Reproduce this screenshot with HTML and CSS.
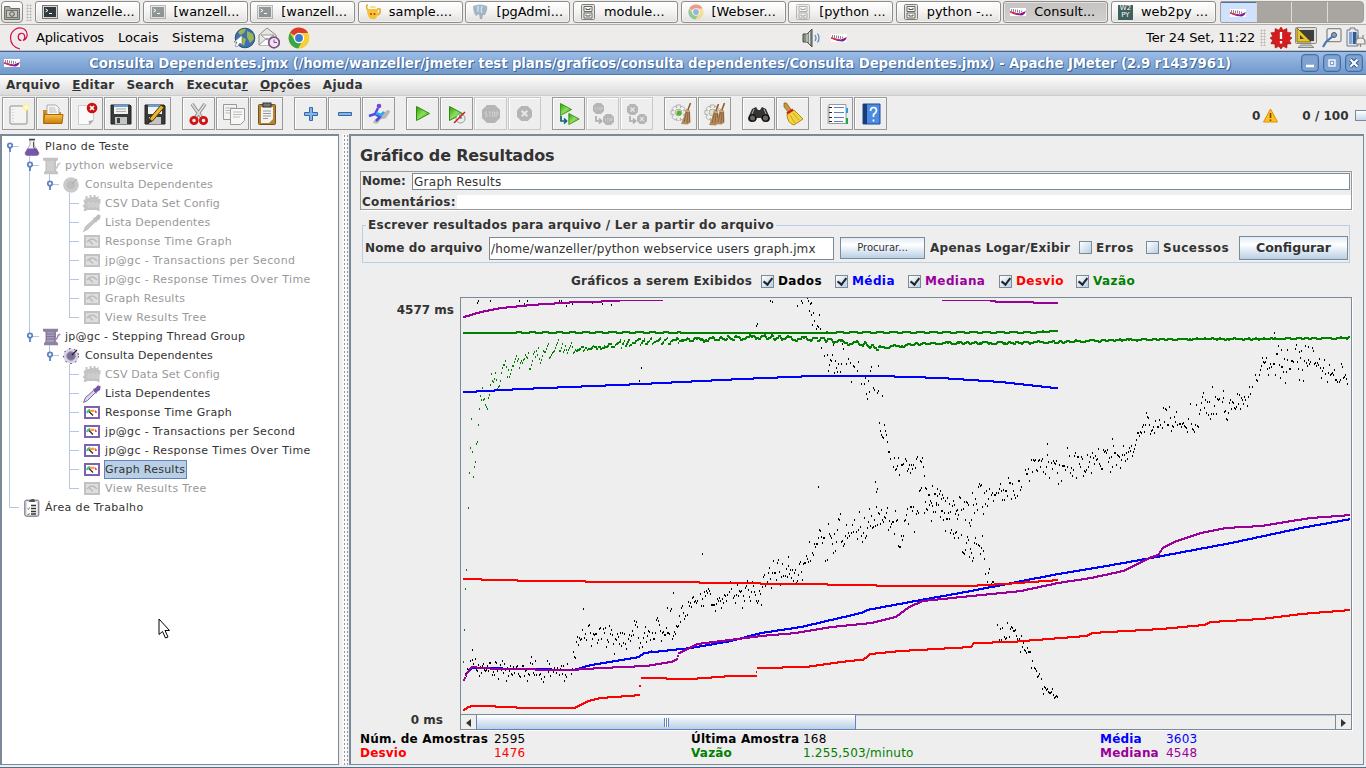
FILE: index.html
```html
<!DOCTYPE html>
<html lang="pt-BR">
<head>
<meta charset="utf-8">
<title>Consulta Dependentes.jmx - Apache JMeter</title>
<link rel="stylesheet" href="styles.css">
</head>
<body>
<svg class="defs" width="0" height="0">
  <defs>
    <linearGradient id="play" x1="0" y1="0" x2="1" y2="1"><stop offset="0" stop-color="#2f9a0b"/><stop offset=".5" stop-color="#8ce05a"/><stop offset="1" stop-color="#3b9f12"/></linearGradient>
    <linearGradient id="folder" x1="0" y1="0" x2="0" y2="1"><stop offset="0" stop-color="#f6c350"/><stop offset="1" stop-color="#c97c05"/></linearGradient>
    <symbol id="term" viewBox="0 0 16 16"><rect x=".5" y="1.5" width="15" height="13" fill="#d8d8d4" stroke="#777"/><rect x="2" y="3" width="12" height="10" fill="#2f3b3d"/><path d="M3.500 5l2.500 1.500-2.500 1.500M7 9.500h3" stroke="#fff" fill="none"/></symbol>
    <symbol id="cabinet" viewBox="0 0 16 16"><rect x="1.500" y=".5" width="13" height="15" rx="1" fill="#e4e4df" stroke="#80807a"/><path d="M4 2.500h8v5H4zM4 9h8v5H4z" fill="#f8f8f6" stroke="#666861"/><path d="M6 4v1.500h4V4M6 10.500V12h4v-1.500" stroke="#555" fill="none"/></symbol>
    <symbol id="chrome" viewBox="0 0 20 20"><circle cx="10" cy="10" r="9.500" fill="#f7d038"/><path d="M10 10L1.800 5.200A9.500 9.500 0 0 1 18.300 5.500H10z" fill="#dd3b2b"/><path d="M1.800 5.200A9.500 9.500 0 0 0 9.200 19.500L13 13 6 12z" fill="#3aa64a"/><circle cx="10" cy="10" r="4.700" fill="#fff"/><circle cx="10" cy="10" r="3.600" fill="#3b7cc9"/></symbol>
    <symbol id="feather" viewBox="0 0 16 8"><rect width="16" height="8" fill="#fff"/><path d="M0 4l4 .5 6 1L16 3q-1 3.500-4 4.500-6 0-12-3z" fill="#86178f"/><path d="M0 3l5 1.500 5 2-5-.5-5-1.500z" fill="#e0304a"/><path d="M1.500 1v3M3.500 1v3M5.500 1.500v2.500M7.500 1.500v3M9.500 2v3M11.500 2.500v2" stroke="#8d8690"/></symbol>
    <symbol id="gauge" viewBox="0 0 16 13"><path class="g-frame" d="M1 1h14v11H1z" fill="#fff" stroke="#7e5fb5" stroke-width="2"/><path d="M3 7q1-3 3-3" stroke="#35ca69" stroke-width="2" fill="none"/><path d="M6 3.700h4l1 1.500-2 1-4-1z" fill="#fb9b3c"/><path d="M11 4q2 1 2 3h-2z" fill="#ef5050"/><path d="M5 5.500l4 4" stroke="#333" stroke-width="1.500"/></symbol>
    <symbol id="gauge-off" viewBox="0 0 16 13"><path d="M1 1h14v11H1z" fill="#dedede" stroke="#c2c2c2" stroke-width="2"/><path d="M3 7q5-6 10 0M5 5.500l4 4" stroke="#bbb" stroke-width="1.500" fill="none"/></symbol>
    <symbol id="spool" viewBox="0 0 18 18"><path d="M0 .8h15v2.500l-2 1v9l2 2v2H1v-2l1.500-2v-9l-2.500-1z" fill="#8e82a2"/><path d="M4 4h7v10H4z" fill="#a79bbb"/><path d="M3 6h9M3 8.500h9M3 11h9" stroke="#746489" stroke-width=".7"/><path d="M12 11.500c4 0 1-6 5.500-5" stroke="#9d8fb0" stroke-width="1.500" fill="none"/></symbol>
    <symbol id="spool-off" viewBox="0 0 18 18"><path d="M0 .8h15v2.500l-2 1v9l2 2v2H1v-2l1.500-2v-9l-2.500-1z" fill="#c3c3c3"/><path d="M4 4h7v10H4z" fill="#cecece"/><path d="M12 11.500c4 0 1-6 5.500-5" stroke="#c5c5c5" stroke-width="1.500" fill="none"/></symbol>
    <symbol id="dial" viewBox="0 0 16 16"><circle cx="8" cy="8" r="7.500" fill="#d9d1e6" stroke="#2b2733" stroke-dasharray="1.500 4"/><circle cx="8" cy="8" r="4.300" fill="#7a6e96" stroke="#9d92ae"/><path d="M9 7l5-5" stroke="#222" stroke-width="1.300"/></symbol>
    <symbol id="dial-off" viewBox="0 0 16 16"><circle cx="8" cy="8" r="7.800" fill="#cacaca"/><circle cx="8" cy="8" r="4.300" fill="#bdbdbd"/><path d="M9 7l5-5" stroke="#aaa"/></symbol>
    <symbol id="config" viewBox="0 0 18 17"><path d="M1 5l2-1V1h2v2h2V0h2v2h2V0h2v2h2V1h1v3h2v4l-1 1v7h-2v-1H4v1H1l1-3-2-2 2-2z" fill="#c4c4c4"/><path d="M5.500 8h2v4h-2zM9.500 8h2v4h-2zM13.500 8h2v4h-2z" fill="none" stroke="#d4d4d4"/></symbol>
    <symbol id="dropper" viewBox="0 0 18 18"><path d="M.5 17.500l2-5 8-7 2 2-8 8z" fill="#ddd5ea" stroke="#7d68a6"/><path d="M10 4l2.500-1L15 .3l2.700 1.200L17 5l-3 2-1 2z" fill="#7553a8"/></symbol>
    <symbol id="dropper-off" viewBox="0 0 18 18"><path d="M.5 17.500l2-5 8-7 2 2-8 8z" fill="#c6c6c6" stroke="#c2c2c2"/><path d="M10 4l2.500-1L15 .3l2.700 1.200L17 5l-3 2-1 2z" fill="#bebebe"/></symbol>
    <symbol id="flask" viewBox="0 0 16 18"><path d="M6 2h4v5l5 8q0 2-2 2.500H3Q1 17 1 15l5-8z" fill="#f4f0fa" stroke="#aaa"/><path d="M3.500 10.500h9L15 15q0 2-2 2.500H3Q1 17 1 15z" fill="#7955b0"/><path d="M5 1.500h6" stroke="#444" stroke-width="1.500"/><path d="M9.500 4v5l4 6" stroke="#555" fill="none"/></symbol>
    <symbol id="clip" viewBox="0 0 16 18"><rect x=".8" y="1.200" width="14" height="16" rx="1.500" fill="#e1dde8" stroke="#6b6278"/><path d="M3 3h9.500v13H3z" fill="#fff"/><path d="M5 3q0-2 3-3t3 3z" fill="#555"/><path d="M7 6.500h5M7 9.500h5M7 12.500h5M7 15h5" stroke="#333" stroke-width="1.300"/><path d="M3.500 9.500l1 1 1-2M3.500 15l1 1 1-2" stroke="#3c9a3c" fill="none"/></symbol>
    <symbol id="broom" viewBox="0 0 12 22"><path d="M10.500 0L7.500 8" stroke="#8b5a25" stroke-width="1.500"/><path d="M6 6l4 1.500 .5 12-3 2-6.500-.5Q4 15 6 6z" fill="#b58b5c"/><path d="M6.500 9L4 19M8 9l-1 11M9.500 9v10" stroke="#815b38" stroke-width=".8"/><path d="M5.500 7.500l4 1.300" stroke="#d8b68a"/></symbol>
    <symbol id="gear" viewBox="0 0 18 18"><path d="M7 1h4v3l2-2 3 3-2 2h3v4h-3l2 3-3 3-2-2v3H7v-3l-2 2-3-3 2-3H1V7h3L2 5l3-3 2 2z" fill="#eee" stroke="#aaa"/><circle cx="9" cy="9" r="3.500" fill="#d9e6cb" stroke="#aaa"/></symbol>
    <symbol id="stop" viewBox="0 0 18 18"><path d="M5 0h8l5 5v8l-5 5H5l-5-5V5z" fill="#b5b5b5"/><path d="M5 7H3v2h2v2.500H3M6.500 7h3M8 7v5M10.500 7h2v4.500h-2zM14 12V7h2v2.500h-2" stroke="#cdcdcd" fill="none"/></symbol>
    <symbol id="kill" viewBox="0 0 16 16"><path d="M4.500 0h7L16 4.500v7L11.500 16h-7L0 11.500v-7z" fill="#b5b5b5"/><path d="M5 5l6 6M11 5l-6 6" stroke="#e6e6e6" stroke-width="2.200"/></symbol>
    <symbol id="arr" viewBox="0 0 8 8"><path d="M1 0v5h5M4 2.500L6.500 5 4 7.500" fill="none" stroke="currentColor" stroke-width="1.700"/></symbol>
    <symbol id="tri" viewBox="0 0 14 15"><path d="M.5.5l13 7-13 7z" fill="url(#play)" stroke="#2e8a10"/></symbol>
  </defs>
</svg>

<div class="taskbar">
  <div class="desk"><svg width="16" height="16" viewBox="0 0 16 16"><path d="M.5 2.500h5l1 2h9v11H.5z" fill="#a7aaa0" stroke="#6c6f66"/><rect x="2.500" y="6.500" width="11" height="7" fill="#c7c9c1" stroke="#70736a"/><circle cx="8" cy="10" r="2.300" fill="none" stroke="#555"/></svg></div>
  <div class="grip"></div>
  <div class="tasks">
    <div class="task"><svg width="16" height="16"><use href="#term"/></svg><span>wanzelle...</span></div>
    <div class="task min"><svg width="16" height="16"><use href="#term"/></svg><span>[wanzell...</span></div>
    <div class="task min"><svg width="16" height="16"><use href="#term"/></svg><span>[wanzell...</span></div>
    <div class="task"><svg width="16" height="16" viewBox="0 0 16 16"><path d="M3 7Q0 1 3 1M12 5h3q1 5-3 6" fill="none" stroke="#dcae2e" stroke-width="1.500"/><path d="M2 5h11q0 9-3 10H6Q2 13 2 5z" fill="#f3c438"/><path d="M4 4h7l-1-2H6z" fill="#f7e08a"/><circle cx="6" cy="10" r="1.100" fill="#cf3d18"/><circle cx="9.500" cy="10" r="1.100" fill="#cf3d18"/></svg><span>sample....</span></div>
    <div class="task min"><svg width="16" height="16" viewBox="0 0 16 16"><path d="M1 2q7-3 14 0 1 4-2 9h-2l-1 4H8L7 10 4 12Q1 8 1 2z" fill="#53799c"/><path d="M6 2v6M10 2q-2 4 0 7" stroke="#dbe6f0" fill="none"/></svg><span>[pgAdmi...</span></div>
    <div class="task"><svg width="16" height="16"><use href="#cabinet"/></svg><span>module...</span></div>
    <div class="task min"><svg width="16" height="16"><use href="#chrome"/></svg><span>[Webser...</span></div>
    <div class="task min"><svg width="16" height="16"><use href="#cabinet"/></svg><span>[python ...</span></div>
    <div class="task"><svg width="16" height="16"><use href="#cabinet"/></svg><span>python -...</span></div>
    <div class="task active"><svg width="16" height="8"><use href="#feather"/></svg><span>Consult...</span></div>
    <div class="task"><div class="w2p">W2<br>PY</div><span>web2py ...</span></div>
  </div>
  <div class="pager"><div class="on"><svg width="16" height="8"><use href="#feather"/></svg></div><div></div><div></div><div></div></div>
</div>

<div class="panel">
  <svg class="debian" width="20" height="24" viewBox="0 0 20 24"><path d="M12.500 14.500C8.500 14.500 8 8 12 7.300c4-.5 5 5 2 7.200 5-2 5.500-8 1.500-11.200C9.500-.5 1.800 4 1.500 11.500 1.500 17 5 21.500 11 23" fill="none" stroke="#d70751" stroke-width="1.200"/></svg>
  <span class="m1">Aplicativos</span><span class="m2">Locais</span><span class="m3">Sistema</span>
  <svg class="web" width="23" height="22" viewBox="0 0 23 22"><circle cx="12" cy="11" r="9.800" fill="#3c6fb4" stroke="#234b80"/><path d="M5 5q4-4 8-3l-2 4-4 2zM14 4l6 3 1 5-4 4-3-6zM9 10l4 2-2 7-3-3z" fill="#9bb84e"/><path d="M9 8v10l-2-2-3 4-2-1 2-4H1z" fill="#fff" stroke="#666" stroke-width=".6"/></svg>
  <svg class="mail" width="22" height="22" viewBox="0 0 22 22"><path d="M1 8l8-7 9 7v10H1z" fill="#e6e6e3" stroke="#8c8c89"/><path d="M1 18l8-7 9 7M3 8h13l-7 5z" fill="#fff" stroke="#999"/><circle cx="16" cy="15.500" r="5.300" fill="#eee5f0" stroke="#7f4c85" stroke-width="1.700"/><path d="M16 12.500v3h3" stroke="#7f4c85" fill="none"/></svg>
  <svg width="22" height="22" class="chr"><use href="#chrome"/></svg>
  <svg class="vol" width="20" height="20" viewBox="0 0 20 20"><path d="M1 6h4l5-5v18l-5-5H1z" fill="#8c8f87" stroke="#4b4e47"/><path d="M5 6v8M7.500 4v12" stroke="#ddd"/><path d="M13 7q2 3 0 6M15.500 5.500q3 4.500 0 9" stroke="#5b8fc7" fill="none" stroke-width="1.300"/></svg>
  <svg width="16" height="8" class="tray"><use href="#feather"/></svg>
  <span class="clock">Ter 24 Set, 11:22</span>
  <div class="grip g2"></div>
  <svg width="22" height="22" viewBox="0 0 22 22" class="i1"><path d="M11 0l2.200 3.200 3.600-1.700.3 4 4 .3-1.800 3.500L22 11l-2.700 2.200 1.800 3.500-4 .3-.3 4-3.600-1.700L11 22l-2.200-2.700L5.200 21l-.3-4-4-.3 1.800-3.500L0 11l2.700-1.700L.9 5.800l4-.3.3-4 3.600 1.700z" fill="#d51d1d" stroke="#930b0b" stroke-width=".6"/><path d="M11 5v7M11 14v2.500" stroke="#fff" stroke-width="2.300"/></svg>
  <svg width="22" height="21" viewBox="0 0 22 21" class="i2"><rect x=".5" y=".5" width="21" height="16" rx="1" fill="#ddd" stroke="#8a8a86"/><rect x="3" y="3" width="16" height="11" fill="#3d3f3c"/><path d="M2 1v14h14z" fill="#e6c22c" stroke="#8c7008"/><path d="M5 8v4h4z" fill="#3d3f3c"/><path d="M6 18h10l3 2.500H3z" fill="#ccc" stroke="#888"/></svg>
  <svg width="20" height="20" viewBox="0 0 20 20" class="i3"><rect x="5" y=".7" width="14" height="13" rx="1.500" fill="#eee" stroke="#8a8a86" stroke-width="1.300"/><circle cx="12" cy="7" r="2.500" fill="#8aa4c4" stroke="#456"/><path d="M11 8L4 14l-3 5" fill="none" stroke="#4577b5" stroke-width="2.200"/></svg>
  <svg width="20" height="21" viewBox="0 0 20 21" class="i4"><path d="M4 1h5v2h3v16H1V3h3z" fill="#e6e8ec" stroke="#6b7a8e"/><path d="M3 5h3.500v12H3z" fill="#88a8cf"/><path d="M7 5h3.500v12H7z" fill="#2e5b97"/><path d="M12 11V8m5 3V8m-7 7q0-4 4.500-4t4.500 4v2h-9zm4.500 2v3" stroke="#85857f" fill="#eee" stroke-width="1.200"/></svg>
</div>

<div class="title">
  <svg width="16" height="8"><use href="#feather"/></svg>
  <span class="ttext">Consulta Dependentes.jmx (/home/wanzeller/jmeter test plans/graficos/consulta dependentes/Consulta Dependentes.jmx) - Apache JMeter (2.9 r1437961)</span>
  <div class="wbtns">
    <svg width="18" height="18" viewBox="0 0 18 18"><rect x=".7" y=".7" width="16.600" height="16.600" rx="3" fill="#7fa3d1" stroke="#365f99"/><path d="M5 12h8" stroke="#fff" stroke-width="2.500"/></svg>
    <svg width="18" height="18" viewBox="0 0 18 18"><rect x=".7" y=".7" width="16.600" height="16.600" rx="3" fill="#7fa3d1" stroke="#365f99"/><rect x="6" y="6" width="6" height="6" fill="none" stroke="#fff" stroke-width="1.300"/><path d="M8 9h2" stroke="#fff" stroke-width="2"/></svg>
    <svg width="18" height="18" viewBox="0 0 18 18"><rect x=".7" y=".7" width="16.600" height="16.600" rx="3" fill="#7fa3d1" stroke="#365f99"/><path d="M5.500 5.500l7 7M12.500 5.500l-7 7" stroke="#27528c" stroke-width="4"/><path d="M5.500 5.500l7 7M12.500 5.500l-7 7" stroke="#fff" stroke-width="2.300"/></svg>
  </div>
</div>

<div class="menu"><span>Arquivo</span><span><u>E</u>ditar</span><span>Search</span><span>Executa<u>r</u></span><span><u>O</u>pções</span><span>Ajuda</span></div>

<div class="toolbar">
  <div class="grp">
    <div class="tb"><svg width="24" height="24" viewBox="0 0 24 24"><rect x="3" y="4" width="17" height="18" rx="1" fill="#f4f4f2" stroke="#8d8f8a"/><path d="M6 7v13" stroke="#bbb" stroke-dasharray="1 2"/><circle cx="19" cy="5" r="3.500" fill="#fdf3a0"/><circle cx="19" cy="5" r="1.500" fill="#fffce8"/></svg></div>
    <div class="tb"><svg width="24" height="24" viewBox="0 0 24 24"><path d="M2 8h6l1 2h11v10H2z" fill="#d08a12"/><path d="M6 3h9l3 3v8H6z" fill="#f6f6f4" stroke="#aaa"/><path d="M8 6h6M8 8h7M8 10h8" stroke="#bbb"/><path d="M2.500 21.500l1-9h18.500l-1 9z" fill="url(#folder)" stroke="#a76707"/></svg></div>
    <div class="tb"><svg width="24" height="24" viewBox="0 0 24 24"><path d="M3.500 3.500h15v15l-4 4h-11z" fill="#fafafa" stroke="#ccc"/><path d="M18.500 18l-5 1 1 4z" fill="#aaa"/><circle cx="17" cy="6" r="5.300" fill="#c9120f"/><path d="M15 4l4 4m0-4l-4 4" stroke="#fff" stroke-width="1.700"/></svg></div>
    <div class="tb"><svg width="24" height="24" viewBox="0 0 24 24"><path d="M2 3h19l1 1v18H2z" fill="#393b3a" stroke="#222"/><path d="M5 3h14v9H5z" fill="#f2f2f2"/><path d="M5 4h14" stroke="#61a1da" stroke-width="2"/><path d="M7 7h10M7 9.500h10" stroke="#aaa"/><path d="M6 15h12v7H6z" fill="#c4c5c3"/><path d="M8 16h3v5H8z" fill="#374148"/></svg></div>
    <div class="tb"><svg width="24" height="24" viewBox="0 0 24 24"><path d="M2 3h19l1 1v18H2z" fill="#393b3a" stroke="#222"/><path d="M5 3h14v9H5z" fill="#f2f2f2"/><path d="M5 4h14" stroke="#61a1da" stroke-width="2"/><path d="M6 15h12v7H6z" fill="#c4c5c3"/><path d="M5 21l2-5L18 3l3 2.500L9.500 19z" fill="#edb42e" stroke="#4d3610"/><path d="M5 21l2-4 2 2z" fill="#222"/></svg></div>
  </div>
  <div class="grp">
    <div class="tb"><svg width="24" height="24" viewBox="0 0 24 24"><path d="M5 2l10 14M18 2L8 16" stroke="#888a85" stroke-width="3.500"/><path d="M5 2l10 14M18 2L8 16" stroke="#ddd" stroke-width="1.700"/><circle cx="7" cy="18.500" r="3.200" fill="none" stroke="#cf1515" stroke-width="2.800"/><circle cx="16.500" cy="18.500" r="3.200" fill="none" stroke="#cf1515" stroke-width="2.800"/></svg></div>
    <div class="tb"><svg width="24" height="24" viewBox="0 0 24 24"><path d="M2.500 2.500h13v15h-13z" fill="#f3f3f1" stroke="#999"/><path d="M4.500 6h9M4.500 8.500h7M4.500 11h6" stroke="#bbb"/><path d="M9.500 6.500h14v12l-4 4h-10z" fill="#f7f7f5" stroke="#999"/><path d="M12 10h9M12 12.500h9M12 15h7" stroke="#bbb"/></svg></div>
    <div class="tb"><svg width="24" height="24" viewBox="0 0 24 24"><rect x="3.500" y="2.500" width="17" height="20" rx="1" fill="#b78336" stroke="#765115"/><path d="M6 5h12v12l-4 4H6z" fill="#f3f3f1"/><rect x="8" y="1" width="8" height="4" fill="#777" stroke="#333"/><path d="M8 9h8M8 11.500h8M8 14h8M8 16.500h5" stroke="#999"/></svg></div>
  </div>
  <div class="grp">
    <div class="tb"><svg width="24" height="24" viewBox="0 0 24 24"><path d="M10.500 5.500h3v5h5v3h-5v5h-3v-5h-5v-3h5z" fill="#86b4e3" stroke="#3269ae"/></svg></div>
    <div class="tb"><svg width="24" height="24" viewBox="0 0 24 24"><path d="M5.500 10.500h13v3h-13z" fill="#86b4e3" stroke="#3269ae"/></svg></div>
    <div class="tb"><svg width="24" height="24" viewBox="0 0 24 24"><path d="M7 21l7-7 8-5-4 6-5 1-4 5" stroke="#b8b8b8" stroke-width="3" fill="none"/><circle cx="12" cy="4" r="2.300" fill="#7a43d9"/><path d="M11 6L8 12l-6 2M8 12l5 3-4 4" fill="none" stroke="#4e4ee0" stroke-width="2.500"/><path d="M9 11l5 2 3-3" stroke="#30a9ed" stroke-width="2.500" fill="none"/></svg></div>
  </div>
  <div class="grp">
    <div class="tb"><svg width="14" height="15"><use href="#tri"/></svg></div>
    <div class="tb"><svg width="24" height="24" viewBox="0 0 24 24"><use href="#tri" x="4" y="4" width="14" height="15"/><circle cx="15.500" cy="16.500" r="4.500" fill="#e8eef0" stroke="#8b9ca0"/><path d="M15 13v3h2" stroke="#555" fill="none"/><path d="M9 21L20 10" stroke="#d81111" stroke-width="1.500"/></svg></div>
    <div class="tb off"><svg width="18" height="18"><use href="#stop"/></svg></div>
    <div class="tb off"><svg width="15" height="15"><use href="#kill"/></svg></div>
  </div>
  <div class="grp">
    <div class="tb"><svg width="24" height="24" viewBox="0 0 24 24"><use href="#tri" x="3" y="1" width="12" height="13"/><use href="#tri" x="11" y="11" width="12" height="12"/><use href="#arr" x="3" y="14" width="8" height="8" color="#13606f"/></svg></div>
    <div class="tb off"><svg width="24" height="24" viewBox="0 0 24 24"><use href="#stop" x="2" y="1" width="11" height="11"/><use href="#stop" x="12" y="12" width="11" height="11"/><use href="#arr" x="4" y="14" width="8" height="8" color="#aaa"/></svg></div>
    <div class="tb off"><svg width="24" height="24" viewBox="0 0 24 24"><use href="#kill" x="2" y="2" width="11" height="11"/><use href="#kill" x="12" y="12" width="10" height="10"/><use href="#arr" x="4" y="14" width="8" height="8" color="#aaa"/></svg></div>
  </div>
  <div class="grp">
    <div class="tb"><svg width="24" height="24" viewBox="0 0 24 24"><use href="#gear" x="1" y="2" width="17" height="17"/><circle cx="10" cy="11" r="2.500" fill="#4fb81c"/><use href="#broom" x="11" y="1" width="12" height="22"/></svg></div>
    <div class="tb"><svg width="24" height="24" viewBox="0 0 24 24"><use href="#gear" x="1" y="2" width="17" height="17"/><use href="#broom" x="5" y="2" width="12" height="22"/><use href="#broom" x="11" y="1" width="12" height="22"/></svg></div>
  </div>
  <div class="grp">
    <div class="tb"><svg width="24" height="24" viewBox="0 0 24 24"><path d="M5 7l4-2 2 3h2l2-3 4 2 4 9q0 4-4 4t-5-4h-4q-1 4-5 4t-4-4z" fill="#333"/><circle cx="5.500" cy="16" r="3.200" fill="#6f645d" stroke="#111" stroke-width="1.300"/><circle cx="18.500" cy="16" r="3.200" fill="#6f645d" stroke="#111" stroke-width="1.300"/><path d="M7 7l-2 5M17 7l2 5" stroke="#aaa"/></svg></div>
    <div class="tb"><svg width="24" height="24" viewBox="0 0 24 24"><path d="M3 1q3-1 4 2l4 6-3 2-5-6z" fill="#c9943a" stroke="#8a5c13" stroke-width=".7"/><path d="M6 12l7-4 9 9-9 6q-7-2-7-11z" fill="#f4d340" stroke="#b08b0d"/><path d="M9 13l5 8M12 11l6 7" stroke="#c9a51d"/><path d="M6 11.500l6-4" stroke="#d32020" stroke-width="2.500"/></svg></div>
  </div>
  <div class="grp">
    <div class="tb"><svg width="24" height="24" viewBox="0 0 24 24"><path d="M2 4h19v18H2z" fill="#cfcfcf"/><path d="M4 2.500h17v19H4z" fill="#fff" stroke="#999"/><path d="M9 5.500h10M9 10.500h10M9 15.500h10M9 19.500h9" stroke="#5b7fc9"/><path d="M4 5.500h3M4 10.500h3M4 15.500h3M4 19.500h3" stroke="#222"/><path d="M22 6v5" stroke="#28a0e0" stroke-width="2"/><path d="M22 16v6" stroke="#1da84c" stroke-width="2"/></svg></div>
    <div class="tb"><svg width="24" height="24" viewBox="0 0 24 24"><path d="M4 2h17v20H4z" fill="#4a8ae0" stroke="#1e4c93"/><path d="M4 2h4v20H4z" fill="#173c78"/><path d="M11.500 9q0-3.500 3-3.500t3 3q0 2-3 4v2.500M14.500 17.500v2" fill="none" stroke="#fff" stroke-width="1.700"/></svg></div>
  </div>
  <div class="counter"><span>0</span><svg width="15" height="15" viewBox="0 0 15 15"><path d="M7.500 1l7 13h-14z" fill="#fbc21e" stroke="#e88a00"/><path d="M7.500 5v5M7.500 11.500v1.500" stroke="#654000" stroke-width="1.500"/></svg><span class="tot">0 / 100</span><i></i></div>
</div>

<div class="main">
  <div class="tree">
    <svg class="lines" width="100" height="380" viewBox="0 136 100 380"><path d="M9.500 152v355.500H19M12 146.500h7M29.500 155v181M32 165.500h7M32 336.500h7M49.500 174v12M52 184.500h7M49.500 345v10M52 355.500h7M69.500 193v124.500M69.500 364v124.500M69 203.500h10M69 222.500h10M69 241.500h10M69 260.500h10M69 279.500h10M69 298.500h10M69 317.500h10M69 374.500h10M69 393.500h10M69 412.500h10M69 431.500h10M69 450.500h10M69 469.500h10M69 488.500h10" stroke="#b0c8e2" fill="none"/><g fill="#fff" stroke="#5f82c1" stroke-width="1.800"><path d="M10 147v5M30 166v5M50 185v5M30 337v5M50 356v5"/><circle cx="10" cy="145.500" r="2.200"/><circle cx="30" cy="164.500" r="2.200"/><circle cx="50" cy="183.500" r="2.200"/><circle cx="30" cy="335.500" r="2.200"/><circle cx="50" cy="354.500" r="2.200"/></g></svg>
    <div class="row l0"><svg width="16" height="18"><use href="#flask"/></svg><span>Plano de Teste</span></div>
    <div class="row l1 off"><svg width="18" height="18"><use href="#spool-off"/></svg><span class="mid">python webservice</span></div>
    <div class="row l2 off"><svg width="16" height="16"><use href="#dial-off"/></svg><span class="tight">Consulta Dependentes</span></div>
    <div class="row l3 off"><svg width="19" height="17"><use href="#config"/></svg><span class="tight">CSV Data Set Config</span></div>
    <div class="row l3 off"><svg width="18" height="18"><use href="#dropper-off"/></svg><span class="tight">Lista Dependentes</span></div>
    <div class="row l3 off"><svg width="16" height="13"><use href="#gauge-off"/></svg><span>Response Time Graph</span></div>
    <div class="row l3 off"><svg width="16" height="13"><use href="#gauge-off"/></svg><span>jp@gc - Transactions per Second</span></div>
    <div class="row l3 off"><svg width="16" height="13"><use href="#gauge-off"/></svg><span>jp@gc - Response Times Over Time</span></div>
    <div class="row l3 off"><svg width="16" height="13"><use href="#gauge-off"/></svg><span class="mid">Graph Results</span></div>
    <div class="row l3 off"><svg width="16" height="13"><use href="#gauge-off"/></svg><span>View Results Tree</span></div>
    <div class="row l1"><svg width="18" height="18"><use href="#spool"/></svg><span class="mid">jp@gc - Stepping Thread Group</span></div>
    <div class="row l2"><svg width="16" height="16"><use href="#dial"/></svg><span class="tight">Consulta Dependentes</span></div>
    <div class="row l3 off"><svg width="19" height="17"><use href="#config"/></svg><span class="tight">CSV Data Set Config</span></div>
    <div class="row l3"><svg width="18" height="18"><use href="#dropper"/></svg><span class="tight">Lista Dependentes</span></div>
    <div class="row l3"><svg width="16" height="13"><use href="#gauge"/></svg><span>Response Time Graph</span></div>
    <div class="row l3"><svg width="16" height="13"><use href="#gauge"/></svg><span>jp@gc - Transactions per Second</span></div>
    <div class="row l3"><svg width="16" height="13"><use href="#gauge"/></svg><span>jp@gc - Response Times Over Time</span></div>
    <div class="row l3"><svg width="16" height="13"><use href="#gauge"/></svg><span class="sel mid">Graph Results</span></div>
    <div class="row l3 off"><svg width="16" height="13"><use href="#gauge-off"/></svg><span>View Results Tree</span></div>
    <div class="row l0"><svg width="16" height="18"><use href="#clip"/></svg><span>Área de Trabalho</span></div>
    <svg class="cursor" width="13" height="21" viewBox="0 0 13 21"><path d="M1 1v15.500l3.500-3 3 6.500 2.500-1-3-6.500h4.500z" fill="#fff" stroke="#000"/></svg>
  </div>
  <div class="split"></div>
  <div class="pane">
    <h1>Gráfico de Resultados</h1>
    <div class="names">
      <div class="nrow"><label>Nome:</label><div class="field">Graph Results</div></div>
      <div class="crow"><label>Comentários:</label><div class="plain"></div></div>
    </div>
    <fieldset class="file">
      <legend>Escrever resultados para arquivo / Ler a partir do arquivo</legend>
      <div class="frow">
        <label class="fl">Nome do arquivo</label><div class="field path">/home/wanzeller/python webservice users graph.jmx</div>
        <div class="btn small">Procurar...</div><span class="ap">Apenas Logar/Exibir</span>
        <span class="ck"><i class="box"></i></span><span class="er">Erros</span><span class="ck"><i class="box"></i></span><span class="su">Sucessos</span>
        <div class="btn big">Configurar</div>
      </div>
    </fieldset>
    <div class="checks">
      <span class="lead">Gráficos a serem Exibidos</span>
      <span class="c1 black"><i class="box on"></i>Dados</span><span class="c2 blue"><i class="box on"></i>Média</span><span class="c3 purple"><i class="box on"></i>Mediana</span><span class="c4 red"><i class="box on"></i>Desvio</span><span class="green"><i class="box on"></i>Vazão</span>
    </div>
    <div class="chart">
      <div class="ylab"><span>4577 ms</span><span class="zero">0 ms</span></div>
      <div class="frame">
        <svg id="plot" width="890" height="416" viewBox="461 298 890 416" shape-rendering="crispEdges"></svg>
        <div class="scroll"><div class="sb l"></div><div class="thumb"><i></i></div><div class="trk"></div><div class="sb r"></div></div>
      </div>
    </div>
    <div class="stats">
      <b>Núm. de Amostras</b><span>2595</span><b>Última Amostra</b><span>168</span><b class="blue">Média</b><span class="blue n4">3603</span>
      <b class="red">Desvio</b><span class="red">1476</span><b class="green">Vazão</b><span class="green">1.255,503/minuto</span><b class="purple">Mediana</b><span class="purple n4">4548</span>
    </div>
  </div>
</div>
<script src="chart.js"></script>
</body>
</html>
```
FILE: styles.css
```css
* { box-sizing: border-box; }
body { margin: 0; width: 1366px; height: 768px; overflow: hidden; background: #eee; font-family: "DejaVu Sans", sans-serif; font-size: 12px; color: #333; white-space: nowrap; display: flex; flex-direction: column; }
svg { display: block; flex: none; }
.defs { position: absolute; }

.taskbar { height: 25px; background: #edeceb; display: flex; padding: 1px 1px 0; border-bottom: 1px solid #b0aeac; color: #000; flex: none; }
.desk { width: 22px; height: 22px; border: 1px solid #8f8d8a; border-radius: 4px; padding: 2px; background: linear-gradient(#fff, #e0dedc); }
.grip { width: 6px; margin: 3px 3px 3px 3px; background: radial-gradient(circle, #bab8b5 45%, transparent 50%) 0 0 / 3px 3px; flex: none; }
.tasks { display: flex; width: 1186px; gap: 2.600px; flex: none; }
.task { width: 105px; height: 22px; border: 1px solid #8f8d8a; border-radius: 3px; background: linear-gradient(#fff, #f4f3f2 50%, #e2e0de); display: flex; align-items: center; padding-left: 6px; gap: 8px; font-size: 12.900px; box-shadow: inset 0 0 0 1px #fff8; }
.task.min svg { opacity: .5; }
.task span { padding-bottom: 1px; }
.task.active { background: linear-gradient(#c5c3c1, #d2d0ce); }
.w2p { width: 15px; height: 15px; background: #41605c; color: #fff; font-size: 7px; line-height: 7px; text-align: center; }
.pager { display: flex; width: 144px; height: 22px; background: #a9a5a1; border-radius: 2px 4px 4px 2px; border: 1px solid #a19e9a; margin-left: -1px; }
.pager div { width: 36px; border-right: 1px solid #dedcda; display: flex; align-items: center; justify-content: center; }
.pager div:last-child { border: 0; }
.pager .on { background: #d0e2fb; border-top: 1px solid #4672ab; }

.panel { height: 26px; background: #edeceb; border-bottom: 1px solid #c3c1bf; display: flex; align-items: center; font-size: 13px; color: #000; padding-left: 9px; flex: none; }
.m1 { margin-left: 7px; width: 82px; letter-spacing: -.25px; } .m2 { width: 54px; } .m3 { width: 61px; }
.mail { margin-left: 2px; } .chr { margin-left: 8px; }
.vol { margin-left: 492px; } .tray { margin-left: 9px; }
.clock { margin-left: 299px; width: 109px; letter-spacing: -.1px; }
.g2 { height: 17px; margin: 0 4px 0 5px; }
.i2 { margin-left: 3px; } .i3 { margin-left: 5px; } .i4 { margin-left: 4px; }

.title { height: 24px; background: linear-gradient(#9bbce6, #83a7d6 60%, #7199c9); border-top: 1px solid #40618d; border-bottom: 1px solid #4d75a8; display: flex; align-items: center; padding-left: 4px; color: #fff; font-weight: bold; font-size: 13.300px; flex: none; }
.title .ttext { margin-left: 69px; width: 1212px; letter-spacing: -.11px; text-shadow: 1px 1px 0 #3d659b, -1px 0 0 #5a82b6; }
.wbtns { display: flex; gap: 4px; }

.menu { height: 21px; background: linear-gradient(#fff, #dadada); border-bottom: 1px solid #ccc; display: flex; align-items: center; padding: 0 0 1px 6px; gap: 12px; letter-spacing: .25px; font-weight: bold; flex: none; }
.toolbar { height: 38px; display: flex; padding: 1px 0 0 2px; gap: 11px; background: #eee; flex: none; }
.grp { display: flex; gap: 1px; height: 33px; }
.tb { width: 33px; height: 33px; border: 1px solid #999; box-shadow: inset 1px 1px #fff; display: flex; align-items: center; justify-content: center; }
.tb.off { border-color: #c8c8c8; }
.counter { display: flex; align-items: center; margin-left: auto; height: 37px; width: 114px; font-weight: bold; }
.counter svg { margin-left: 3px; } .counter .tot { margin-left: 24px; width: 55px; }
.counter i { width: 11px; height: 11px; border: 1px solid #7a8a99; border-right: 0; background: linear-gradient(#fff, #c6d8ea); }

.main { flex: 1; display: flex; border-bottom: 1px solid #54708f; height: 634px; }
.tree { position: relative; width: 339px; height: 631px; border: 2px solid #7a8a99; border-right-width: 1px; border-bottom-width: 1px; background: #fff; padding-top: 1px; font-size: 11px; letter-spacing: .35px; flex: none; }
.lines { position: absolute; left: 0; top: 0; margin-left: -2px; }
.row { height: 19px; display: flex; align-items: center; position: relative; }
.row span { position: relative; }
.row.off { color: #999; }
.row .tight { letter-spacing: .14px; }
.row .mid { letter-spacing: .25px; }
.l0 { padding-left: 22px; } .l1 { padding-left: 41px; } .l2 { padding-left: 61px; } .l3 { padding-left: 82px; }
.l0 span { margin-left: 5px; } .l1 span { margin-left: 4px; } .l2 span { margin-left: 6px; } .l3 span { margin-left: 5px; }
.l3 svg[width="18"] { margin: 0 -1px 0 -1px; } .l3 svg[width="19"] { margin: 0 -1px 0 -2px; }
.sel { background: #b8cfe5; outline: 1px solid #6382bf; line-height: 17px; padding-right: 1px; }
.cursor { position: absolute; left: 156px; top: 482px; }
.split { width: 10px; background: radial-gradient(circle, #999 28%, #f8f8f8 42%) 1px 0 / 3px 4px; border-left: 3px solid #eee; border-right: 1px solid #eee; height: 631px; flex: none; }
.pane { flex: 1; margin-right: 2px; height: 631px; border: 1px solid #7a8a99; border-top-width: 2px; border-left-width: 2px; padding: 10px 11px 0 9px; }
h1 { margin: 0; font-size: 16px; line-height: 20px; height: 25px; letter-spacing: -.18px; font-weight: bold; }
.names { border: 1px solid #999; height: 39px; box-shadow: 1px 1px #fff; padding: 1px 0 0 1px; font-weight: bold; letter-spacing: .3px; }
.nrow { display: flex; height: 17px; line-height: 16px; } .nrow label { width: 50px; letter-spacing: 0; }
.field { border: 1px solid #7a8a99; background: #fff; flex: 1; margin-right: 1px; padding-left: 1px; line-height: 16px; font-weight: normal; letter-spacing: .28px; }
.crow { display: flex; margin-top: 5px; height: 14px; line-height: 15px; } .crow label { width: 95px; } .plain { flex: 1; background: #fff; }
.file { margin: 7px 2px 0 2px; border: 1px solid #b8cfe5; padding: 0; height: 46px; min-width: 0; font-weight: bold; }
legend { padding: 0 2px; margin-left: 3px; line-height: 16px; letter-spacing: .27px; }
.frow { display: flex; align-items: center; margin-top: 3px; height: 24px; }
.fl { width: 126px; padding-left: 2px; letter-spacing: .13px; }
.path { flex: none; width: 345px; height: 23px; line-height: 22px; margin-right: 6px; letter-spacing: .13px; }
.btn { border: 1px solid #7a8a99; background: linear-gradient(#e2ebf5, #fff 35%, #b8cfe5); text-align: center; }
.small { width: 85px; height: 22px; font-size: 10px; font-weight: normal; line-height: 20px; }
.big { width: 109px; height: 24px; line-height: 22px; font-size: 12.600px; }
.ap { margin-left: 5px; width: 149px; letter-spacing: .25px; } .er { width: 50px; letter-spacing: .5px; } .su { width: 76px; letter-spacing: .5px; } .ck { width: 17px; }
.box { display: inline-block; width: 13px; height: 13px; border: 1px solid #7a8a99; background: linear-gradient(135deg, #fff, #b8cfe5); vertical-align: -2px; position: relative; flex: none; }
.box.on::after { content: ""; position: absolute; left: 3px; top: 0; width: 4px; height: 7px; border: solid #222; border-width: 0 2px 2px 0; transform: rotate(38deg); }
.checks { height: 16px; margin-top: 10px; padding-left: 211px; display: flex; align-items: center; font-weight: bold; letter-spacing: .4px; }
.checks span { display: flex; align-items: center; gap: 4px; } .checks .lead { width: 190px; letter-spacing: .25px; } .c1 { width: 74px; } .c2 { width: 73px; } .c3 { width: 91px; } .c4 { width: 77px; }
.black { color: #000; } .blue { color: #00f; } .purple { color: #909; } .red { color: red; } .green { color: #007f00; }
.chart { display: flex; margin-top: 8px; height: 433px; }
.ylab { width: 100px; display: flex; flex-direction: column; justify-content: space-between; padding: 6px 6px 3px 0; text-align: right; font-weight: bold; } .zero { padding-right: 11px; }
.frame { width: 892px; border: 1px solid #7a8a99; box-shadow: 1px 1px #fff; flex: none; }
.scroll { display: flex; height: 16px; border-top: 1px solid #7a8a99; }
.sb { width: 16px; display: flex; align-items: center; justify-content: center; }
.sb::after { content: ""; border: 5px solid transparent; border-width: 4px 5px 4px 0; border-right-color: #333; }
.sb.r { border-left: 1px solid #7a8a99; } .sb.r::after { border-width: 4px 0 4px 5px; border-left-color: #333; }
.sb.l { width: 15px; }
.thumb { width: 380px; border: 1px solid #6382bf; border-top: 0; background: linear-gradient(#fff 5%, #e2ebf5 40%, #b8cfe5); display: flex; align-items: center; justify-content: center; }
.thumb i { width: 5px; height: 9px; background: repeating-linear-gradient(90deg, #6382bf 0 1px, #fff 1px 2px); }
.trk { flex: 1; box-shadow: inset 0 1px #bcc8d4; }
.stats { display: grid; grid-template-columns: 134px 197px 112px 297px 66px auto; line-height: 14px; margin-top: 2px; color: #000; letter-spacing: .2px; }
.stats .blue { color: #00f; } .stats .purple { color: #909; } .stats .red { color: red; } .stats .green { color: #007f00; }
```
FILE: chart.js
```js
const plot = document.getElementById('plot');

let seed = 20130924;
function rnd() {
  seed = (seed * 1664525 + 1013904223) % 4294967296;
  return seed / 4294967296;
}

// Linear interpolation through a flat list x0, y0, x1, y1, ...
function at(pts, x) {
  let i = 0;
  while (i < pts.length - 4 && x >= pts[i + 2]) i += 2;
  const t = (x - pts[i]) / (pts[i + 2] - pts[i]);
  return pts[i + 1] + t * (pts[i + 3] - pts[i + 1]);
}

function draw(d, color) {
  const p = document.createElementNS('http://www.w3.org/2000/svg', 'path');
  p.setAttribute('d', d);
  p.setAttribute('fill', color);
  plot.appendChild(p);
}

function dot(x, y) {
  return `M${Math.round(x)} ${Math.round(y)}h1v2h-1z`;
}

function line(pts, color, wobble) {
  let d = '';
  for (let x = pts[0]; x < pts[pts.length - 2] - 1; x++) {
    const y = Math.round(at(pts, x) + (wobble ? wobble(x) : 0));
    d += `M${x} ${y}h2v2h-2z`;
  }
  draw(d, color);
}

// Scatter band: x, centre, half height
function scatter(band, from, to, density) {
  const mid = [], amp = [];
  band.forEach(b => { mid.push(b[0], b[1]); amp.push(b[0], b[2]); });
  let d = '', prev = 0;
  for (let x = from; x <= to; x++) {
    if (rnd() > density) continue;
    prev = prev * 0.25 + (rnd() + rnd() - 1) * 1.3;
    d += dot(x, at(mid, x) + prev * at(amp, x));
  }
  draw(d, '#000');
}

scatter([[465, 674, 7], [472, 669, 9], [500, 669, 10], [568, 671, 11], [575, 645, 10], [583, 634, 12], [605, 635, 14],
  [640, 635, 14], [660, 629, 15], [683, 623, 14], [692, 600, 8], [710, 595, 11], [755, 594, 12], [765, 584, 13],
  [778, 573, 14], [796, 574, 9], [808, 558, 20], [820, 543, 20], [840, 532, 18], [862, 527, 14], [880, 517, 15], [898, 524, 18],
  [915, 508, 18], [935, 508, 18], [955, 513, 15], [980, 498, 16], [1000, 491, 12], [1020, 480, 15],
  [1027, 468, 12], [1045, 461, 16], [1062, 465, 13], [1080, 463, 14], [1100, 456, 13], [1120, 454, 14], [1132, 449, 8],
  [1140, 430, 8], [1144, 417, 14], [1160, 423, 15], [1180, 419, 15], [1200, 413, 15], [1220, 405, 12], [1246, 405, 14],
  [1253, 382, 6], [1263, 366, 11], [1280, 362, 18], [1310, 361, 18], [1325, 368, 12], [1349, 371, 10]], 465, 1348, 0.93);

scatter([[806, 300, 8], [812, 318, 12], [824, 338, 15], [829, 360, 13], [845, 363, 20], [860, 369, 16], [874, 380, 16],
  [876, 396, 16], [880, 423, 12], [886, 435, 13], [890, 463, 11], [905, 460, 12], [921, 461, 11], [925, 485, 5],
  [933, 498, 12], [945, 511, 12], [955, 530, 15], [965, 546, 12], [983, 546, 10], [986, 572, 10], [996, 582, 5]], 806, 996, 0.8);
scatter([[997, 631, 10], [1016, 630, 12], [1020, 646, 10], [1030, 652, 13], [1035, 673, 7], [1043, 689, 5], [1052, 692, 4], [1057, 696, 2]], 997, 1057, 0.9);

draw([[472,649],[477,302],[478,300],[490,300],[519,300],[524,303],[527,300],[559,300],[561,300],[566,305],
  [572,303],[592,302],[602,303],[611,304],[641,367],[639,380],[583,608],[673,592],[667,607],[702,553],[756,325],[757,323],
  [770,300],[772,301],[797,305],[801,300],[802,302],[811,302],[818,486],[788,556],[875,481],[876,491],[877,488],[1047,443],[1067,447],
  [1112,438],[1212,386],[1223,390],[1274,332],[1281,349],[1287,349],[1299,351],[1308,346],[882,395],[878,365]
].map(p => dot(p[0], p[1])).join(''), '#000');

const green = '#007f00';
const early = [[463,661],[464,629],[465,588],[466,569],[468,507],[469,472],[470,447],[471,418],[472,451],[473,476],[474,466],
  [475,461],[476,443],[477,441],[478,424],[479,408],[480,395],[481,399],[482,387],[483,399],[484,398],[485,404],[486,406],
  [487,408],[488,397],[489,394],[490,384],[491,373],[492,380],[493,381],[494,378],[495,372],[496,379],[497,388],[498,386],
  [499,385],[500,380],[501,372],[502,367],[503,364],[504,364],[505,360],[506,366],[507,376],[508,369],[509,376],[510,373],
  [511,369],[512,365],[513,365],[514,361],[515,358],[516,355],[517,360],[518,358],[519,367],[520,362],[521,360],
  [522,362],[523,359],[524,358],[525,354],[526,356],[527,357],[528,352],[529,368],[530,368],[531,364],[532,360],[533,353],
  [534,351],[535,356],[536,350],[537,354],[538,347],[539,358],[540,362],[541,359],[542,355],[543,350],[544,351],[545,351],
  [546,348],[547,345],[548,343],[549,357],[550,356],[551,354],[552,352],[553,351],[554,350],[555,347],[556,344],[557,342],
  [558,339],[559,350],[560,350],[561,347],[562,343],[563,351],[564,349],[565,345],[566,349],[567,352],[568,349],[569,347],
  [570,345],[571,342],[572,346],[573,352],[574,351],[575,349]];
let g = early.map(p => dot(p[0], p[1])).join('');
const ramp = [576, 348, 600, 346, 625, 342, 640, 340, 660, 339.500, 690, 339];
let phase = 0, len = 7;
for (let x = 576; x < 690; x++) {
  const a = x > 612 && x < 670 ? 3.5 : 1.8;
  const y = at(ramp, x) + a * (1 - 2 * phase / len) + (rnd() - .5) * 1.6;
  g += dot(x, y) + (rnd() < .5 ? dot(x + 1, y) : '');
  if (++phase >= len) { phase = 0; len = 4 + Math.floor(rnd() * 8); }
}
draw(g, green);

line([463, 332, 500, 332, 520, 331.600, 640, 331.400, 700, 332, 820, 332, 840, 331.400, 1040, 331.400, 1042, 330.500, 1058, 330], green,
  x => Math.sin(x * .47) * .35);
line([690, 339, 740, 337, 760, 336, 800, 338, 820, 338, 840, 341, 862, 343, 876, 347, 900, 345, 915, 343, 960, 342, 1000, 342,
  1060, 341, 1120, 339, 1200, 338, 1260, 338, 1350, 337], green,
  x => (x < 880 ? 1.7 : x < 1100 ? .9 : .55) * (Math.sin(x * .61 + 2 * Math.sin(x * .13)) + .4 * Math.sin(x * 1.7)));

line([463, 391.200, 520, 388, 640, 383, 740, 378, 800, 375.500, 890, 375.400, 940, 377, 1000, 381, 1058, 387.500], '#00f');
line([463, 679, 466, 672, 471, 667, 478, 667, 573, 669, 590, 664, 620, 659, 638, 656, 643, 652, 690, 647, 730, 640, 760, 632,
  800, 626, 860, 612, 866, 609, 920, 599, 970, 590, 1057, 573, 1100, 566, 1150, 557, 1230, 542, 1300, 527, 1350, 518], '#00f');
line([463, 316, 480, 311, 500, 307, 530, 304, 570, 301.400, 600, 300.500, 620, 300], '#909');
draw('M619 300h44v1h-44zM942 300h48v1h-48z', '#909');
line([990, 300.400, 1020, 301, 1058, 302.500], '#909');
line([463, 679, 466, 672, 471, 666, 480, 667, 500, 668, 570, 669, 600, 667, 645, 665, 670, 661, 676, 658, 678, 652, 696, 643,
  760, 635, 795, 632, 830, 626, 870, 622, 895, 616, 908, 606, 922, 600, 970, 595, 1000, 592, 1020, 590, 1057, 582, 1090, 577,
  1122, 570, 1135, 564, 1148, 557, 1157, 554, 1162, 547, 1173, 541, 1200, 532, 1225, 527, 1260, 525, 1290, 520, 1310, 517,
  1350, 514], '#909');
line([463, 578, 520, 579.600, 620, 581, 730, 581.700, 760, 582.500, 802, 583, 885, 584.700, 975, 584.600, 1010, 582.500, 1058, 579], 'red');
line([463, 709, 467, 706, 473, 704.500, 520, 706.700, 573, 707, 587, 700, 600, 697, 640, 694], 'red');
line([641, 677, 690, 678, 730, 675, 757, 675], 'red');
line([757, 667, 805, 666, 840, 661, 862, 658.500, 866, 656, 869, 653, 900, 650, 970, 646, 973, 642, 1010, 641, 1085, 635, 1091, 632,
  1160, 628, 1203, 624, 1210, 621, 1260, 618, 1300, 613, 1350, 609], 'red');
draw('M639 685h2v2h-2zM756 671h1v2h-1z', 'red');
```
